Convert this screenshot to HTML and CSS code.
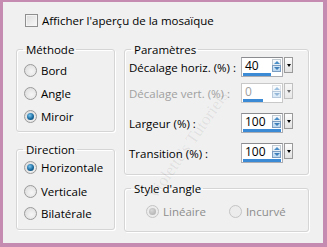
FILE: index.html
```html
<!DOCTYPE html>
<html lang="fr">
<head>
    <meta charset="UTF-8">
    <title>Mosaïque</title>
    <link rel="stylesheet" href="styles.css">
</head>
<body>
    <div class="frame">
        <label class="check-row">
            <span class="checkbox"></span>
            Afficher l'aperçu de la mosaïque
        </label>

        <div class="columns">
            <div class="col-left">
                <fieldset class="group group-method">
                    <legend>Méthode</legend>
                    <div class="option"><span class="radio"></span>Bord</div>
                    <div class="option"><span class="radio"></span>Angle</div>
                    <div class="option"><span class="radio checked"></span>Miroir</div>
                </fieldset>
                <fieldset class="group group-direction">
                    <legend>Direction</legend>
                    <div class="option"><span class="radio checked"></span>Horizontale</div>
                    <div class="option"><span class="radio"></span>Verticale</div>
                    <div class="option"><span class="radio"></span>Bilatérale</div>
                </fieldset>
            </div>

            <div class="col-right">
                <fieldset class="group group-params">
                    <legend>Paramètres</legend>
                    <div class="param">
                        <span class="param-label">Décalage horiz. (%) :</span>
                        <div class="spin">
                            <div class="spin-field">
                                <div class="spin-top">
                                    <span class="spin-value">40</span>
                                    <span class="arrows"><i class="up"></i><i class="down"></i></span>
                                </div>
                                <div class="spin-bar" style="width: 70%"></div>
                            </div>
                            <span class="drop"></span>
                        </div>
                    </div>
                    <div class="param disabled">
                        <span class="param-label">Décalage vert. (%) :</span>
                        <div class="spin">
                            <div class="spin-field">
                                <div class="spin-top">
                                    <span class="spin-value">0</span>
                                    <span class="arrows"><i class="up"></i><i class="down"></i></span>
                                </div>
                                <div class="spin-bar" style="width: 50%"></div>
                            </div>
                            <span class="drop"></span>
                        </div>
                    </div>
                    <div class="param">
                        <span class="param-label">Largeur (%) :</span>
                        <div class="spin">
                            <div class="spin-field">
                                <div class="spin-top">
                                    <span class="spin-value">100</span>
                                    <span class="arrows"><i class="up"></i><i class="down"></i></span>
                                </div>
                                <div class="spin-bar" style="width: 100%"></div>
                            </div>
                            <span class="drop"></span>
                        </div>
                    </div>
                    <div class="param">
                        <span class="param-label">Transition (%) :</span>
                        <div class="spin">
                            <div class="spin-field">
                                <div class="spin-top">
                                    <span class="spin-value">100</span>
                                    <span class="arrows"><i class="up"></i><i class="down"></i></span>
                                </div>
                                <div class="spin-bar" style="width: 100%"></div>
                            </div>
                            <span class="drop"></span>
                        </div>
                    </div>
                </fieldset>
                <fieldset class="group group-style">
                    <legend>Style d'angle</legend>
                    <div class="style-row">
                        <div class="option disabled"><span class="radio checked"></span>Linéaire</div>
                        <div class="option disabled"><span class="radio"></span>Incurvé</div>
                    </div>
                </fieldset>
            </div>
        </div>

        <div class="watermark">Violette's Tutoriels</div>
    </div>
</body>
</html>
```

FILE: styles.css
```css
body {
    margin: 0;
    background-color: #c58bb0;
    font-family: "Open Sans", "Liberation Sans", sans-serif;
    font-size: 11.5px;
    color: #000;
}
.frame {
    position: relative;
    overflow: hidden;
    margin: 2px 4px 4px 3px;
    height: 241px;
    background-color: #f0f0f0;
}
.check-row {
    display: flex;
    align-items: center;
    gap: 4px;
    padding: 11px 0 0 22px;
    height: 15px;
}
.checkbox {
    width: 11px;
    height: 11px;
    border: 1px solid #8f8f8f;
    background: linear-gradient(135deg, #dcdcdc, #f8f8f8);
    box-shadow: inset 0 0 0 1px #f4f4f4;
}
.columns {
    display: flex;
    gap: 9px;
    padding: 14px 0 0 13px;
}
.col-left {
    width: 99px;
    display: flex;
    flex-direction: column;
    gap: 10px;
}
.col-right {
    width: 185px;
    display: flex;
    flex-direction: column;
    gap: 6px;
}
.group {
    margin: 0;
    padding: 0 4px;
    border: 1px solid #d5d5d5;
    border-radius: 3px;
    box-shadow: inset 1px 1px 0 #fff, 1px 1px 0 #fff;
}
.group legend {
    padding: 0 2px 0 3px;
    margin-left: 2px;
    line-height: 15px;
}
.group-method {
    height: 88px;
}
.group-direction {
    height: 86px;
}
.group-params {
    height: 131px;
}
.group-style {
    height: 49px;
}
.option {
    display: flex;
    align-items: center;
    gap: 4px;
    height: 16px;
    margin-top: 7px;
    padding-left: 3px;
}
.group-method .option:first-of-type {
    margin-top: 5px;
}
.group-direction .option {
    margin-top: 8px;
}
.group-direction .option:first-of-type {
    margin-top: 2px;
}
.group-direction .option:last-of-type {
    margin-top: 6px;
}
.radio {
    position: relative;
    width: 11px;
    height: 11px;
    border: 1px solid #9a9a9a;
    border-radius: 50%;
    background: radial-gradient(circle at 60% 60%, #f6f6f6, #d8d8d8);
}
.radio.checked::after {
    content: "";
    position: absolute;
    left: 2px;
    top: 2px;
    width: 7px;
    height: 7px;
    border-radius: 50%;
    background: radial-gradient(circle at 40% 35%, #7cc6f0, #1a6a9e 55%, #0b3e62);
}
.option.disabled {
    color: #8d8d8d;
}
.option.disabled .radio {
    border-color: #c4c4c4;
    background: #ececec;
}
.option.disabled .radio.checked::after {
    background: radial-gradient(circle at 40% 35%, #d8d8d8, #a8a8a8);
}
.style-row {
    display: flex;
    gap: 20px;
    padding-left: 14px;
}
.style-row .option {
    margin-top: 7px;
}
.param {
    display: flex;
    align-items: center;
    justify-content: space-between;
    padding-right: 11px;
    height: 20px;
    margin-top: 10px;
}
.param:first-of-type {
    margin-top: 0;
}
.param.disabled {
    margin-top: 6px;
    color: #a0a0a0;
}
.spin {
    display: flex;
    align-items: flex-start;
    gap: 1px;
}
.spin-field {
    width: 40px;
    height: 18px;
    border: 1px solid #abadb3;
    border-top-color: #8a8c90;
    background-color: #fff;
    display: flex;
    flex-direction: column;
}
.spin-top {
    display: flex;
    align-items: center;
    justify-content: space-between;
    height: 15px;
    padding: 0 1px 0 3px;
}
.spin-value {
    font-size: 12px;
}
.arrows {
    display: flex;
    flex-direction: column;
    width: 9px;
    height: 13px;
}
.arrows i {
    flex: 1;
    display: flex;
    align-items: center;
    justify-content: center;
}
.arrows .up {
    background: linear-gradient(#fbfbfb, #e4eef6);
    border: 1px solid #c0c8d0;
    border-bottom: none;
}
.arrows .up::before {
    content: "";
    border-left: 3px solid transparent;
    border-right: 3px solid transparent;
    border-bottom: 3px solid #4a8ec8;
}
.arrows .down {
    background: linear-gradient(#d7e8f6, #b8d6ef);
    border: 1px solid #7a9cc0;
}
.arrows .down::before {
    content: "";
    border-left: 3px solid transparent;
    border-right: 3px solid transparent;
    border-top: 3px solid #3f7fba;
}
.spin-bar {
    height: 3px;
    margin-left: 1px;
    max-width: 38px;
    background-color: #3b8ad6;
}
.drop {
    width: 7px;
    height: 14px;
    border: 1px solid #9a9a9a;
    background: linear-gradient(#fdfdfd, #e2e2e2);
    display: flex;
    align-items: center;
    justify-content: center;
}
.drop::before {
    content: "";
    border-left: 2px solid transparent;
    border-right: 2px solid transparent;
    border-top: 3px solid #000;
}
.param.disabled .spin-field {
    border-color: #c8c8c8;
}
.param.disabled .spin-value {
    color: #a0a0a0;
}
.param.disabled .arrows,
.param.disabled .drop {
    opacity: 0.55;
}
.watermark {
    position: absolute;
    left: 140px;
    top: 190px;
    transform: rotate(-55deg);
    transform-origin: left top;
    font-family: "Liberation Serif", serif;
    font-size: 17px;
    color: rgba(0, 0, 0, 0.08);
    white-space: nowrap;
    pointer-events: none;
}
```
